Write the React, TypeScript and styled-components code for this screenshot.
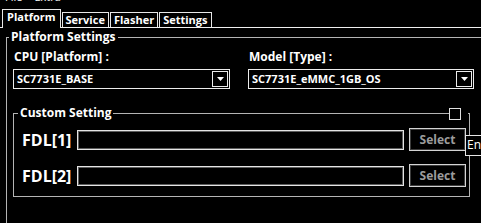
import React from "react";
import styled, { createGlobalStyle } from "styled-components";

const Global = createGlobalStyle`
  html, body { margin: 0; padding: 0; background: #000; overflow: hidden; }
  body { font-family: "Open Sans", "Noto Sans", sans-serif; color: #fff; }
  * { box-sizing: border-box; }
`;

const Window = styled.div`
  position: relative;
  width: 481px;
  height: 223px;
  overflow: hidden;
  background: #000;
`;

const MenuBar = styled.div`
  display: flex;
  gap: 12px;
  height: 9px;
  padding-left: 5px;
  overflow: hidden;
`;

const MenuItem = styled.span`
  font-size: 11px;
  line-height: 14px;
  margin-top: -10px;
  color: #fff;
`;

const TabStrip = styled.div`
  display: flex;
  align-items: flex-end;
  height: 18px;
  padding-left: 2px;
  gap: 1px;
  position: relative;
  z-index: 1;
`;

const Tab = styled.div<{ $active?: boolean }>`
  height: ${(p) => (p.$active ? 19 : 15)}px;
  margin-bottom: ${(p) => (p.$active ? -1 : 0)}px;
  padding: 0 ${(p) => (p.$active ? 4 : 3)}px;
  border: 1px solid #e8e8e8;
  border-bottom: none;
  background: #000;
  font-size: 11px;
  font-weight: 700;
  line-height: 14px;
  color: #fff;
  white-space: nowrap;
`;

const TabPanel = styled.div`
  border-top: 1px solid #f0f0f0;
  padding: 2px 0 0 6px;
`;

const GroupBox = styled.fieldset<{ $width: number; $height?: number }>`
  position: relative;
  margin: 0;
  min-width: 0;
  width: ${(p) => p.$width}px;
  ${(p) => (p.$height ? `height: ${p.$height}px;` : "")}
  border: 1px solid #b4b4b4;
`;

const OuterGroup = styled(GroupBox)`
  padding: 6px 0 0 6px;
`;

const CustomGroup = styled(GroupBox)`
  margin-top: 17px;
  padding: 8px 0 9px 8px;
`;

const Legend = styled.legend<{ $offset: number }>`
  margin-left: ${(p) => p.$offset}px;
  padding: 0 2px;
  font-size: 12px;
  font-weight: 700;
  line-height: 14px;
  color: #fff;
`;

const SelectorGrid = styled.div`
  display: grid;
  grid-template-columns: 217px 226px;
  column-gap: 18px;
`;

const Field = styled.div`
  display: flex;
  flex-direction: column;
  gap: 5px;
`;

const FieldLabel = styled.div`
  font-size: 12px;
  font-weight: 700;
  line-height: 14px;
  padding-left: 1px;
  color: #fff;
`;

const Combo = styled.div`
  display: flex;
  align-items: center;
  height: 20px;
  border: 1px solid #ececec;
  padding: 1px;
  background: #000;
`;

const ComboText = styled.span`
  flex: 1;
  padding-left: 2px;
  font-size: 11px;
  font-weight: 700;
  line-height: 14px;
  color: #fff;
`;

const ComboButton = styled.div`
  display: flex;
  align-items: center;
  justify-content: center;
  width: 16px;
  height: 16px;
  border: 1px solid #ececec;
  background: #000;
`;

const EnableBox = styled.div`
  position: absolute;
  top: -13px;
  right: 1px;
  width: 19px;
  height: 14px;
  background: #000;
  display: flex;
  align-items: center;
`;

const CheckSquare = styled.div`
  width: 12px;
  height: 12px;
  border: 1px solid #e0e0e0;
  background: #000;
`;

const FdlGrid = styled.div`
  display: grid;
  grid-template-columns: 50px 327px 57px;
  column-gap: 5px;
  row-gap: 13px;
  align-items: center;
`;

const FdlLabel = styled.div`
  font-size: 16px;
  font-weight: 700;
  line-height: 20px;
  color: #fff;
  white-space: nowrap;
`;

const PathBox = styled.div`
  height: 20px;
  border: 1px solid #e4e4e4;
  box-shadow: inset 0 0 0 1px #5c5c5c;
  background: #000;
`;

const SelectButton = styled.div`
  display: flex;
  align-items: center;
  justify-content: center;
  height: 23px;
  border: 1px solid #d4d4d4;
  box-shadow: inset 0 0 0 1px #3c3c3c;
  font-size: 12px;
  font-weight: 700;
  color: #9c9c9c;
  background: #000;
`;

const Tooltip = styled.div`
  position: absolute;
  left: 465px;
  top: 135px;
  width: 40px;
  height: 21px;
  border: 1px solid #e6e6e6;
  background: #000;
  padding-left: 1px;
  font-size: 12px;
  line-height: 18px;
  color: #fff;
`;

const Caret = () => (
  <svg width="7" height="4" viewBox="0 0 7 4">
    <path d="M0 0 H7 L3.5 4 Z" fill="#fff" />
  </svg>
);

const tabs = ["Platform", "Service", "Flasher", "Settings"];

export default function App() {
  return (
    <Window>
      <Global />
      <MenuBar>
        <MenuItem>File</MenuItem>
        <MenuItem>Extra</MenuItem>
      </MenuBar>
      <TabStrip>
        {tabs.map((t, i) => (
          <Tab key={t} $active={i === 0}>
            {t}
          </Tab>
        ))}
      </TabStrip>
      <TabPanel>
        <OuterGroup $width={700} $height={300}>
          <Legend $offset={-4}>Platform Settings</Legend>
          <SelectorGrid>
            <Field>
              <FieldLabel>CPU [Platform] :</FieldLabel>
              <Combo>
                <ComboText>SC7731E_BASE</ComboText>
                <ComboButton>
                  <Caret />
                </ComboButton>
              </Combo>
            </Field>
            <Field>
              <FieldLabel>Model [Type] :</FieldLabel>
              <Combo>
                <ComboText>SC7731E_eMMC_1GB_OS</ComboText>
                <ComboButton>
                  <Caret />
                </ComboButton>
              </Combo>
            </Field>
          </SelectorGrid>
          <CustomGroup $width={457}>
            <Legend $offset={-4}>Custom Setting</Legend>
            <EnableBox>
              <CheckSquare />
            </EnableBox>
            <FdlGrid>
              <FdlLabel>FDL[1]</FdlLabel>
              <PathBox />
              <SelectButton>Select</SelectButton>
              <FdlLabel>FDL[2]</FdlLabel>
              <PathBox />
              <SelectButton>Select</SelectButton>
            </FdlGrid>
          </CustomGroup>
        </OuterGroup>
      </TabPanel>
      <Tooltip>En</Tooltip>
    </Window>
  );
}
